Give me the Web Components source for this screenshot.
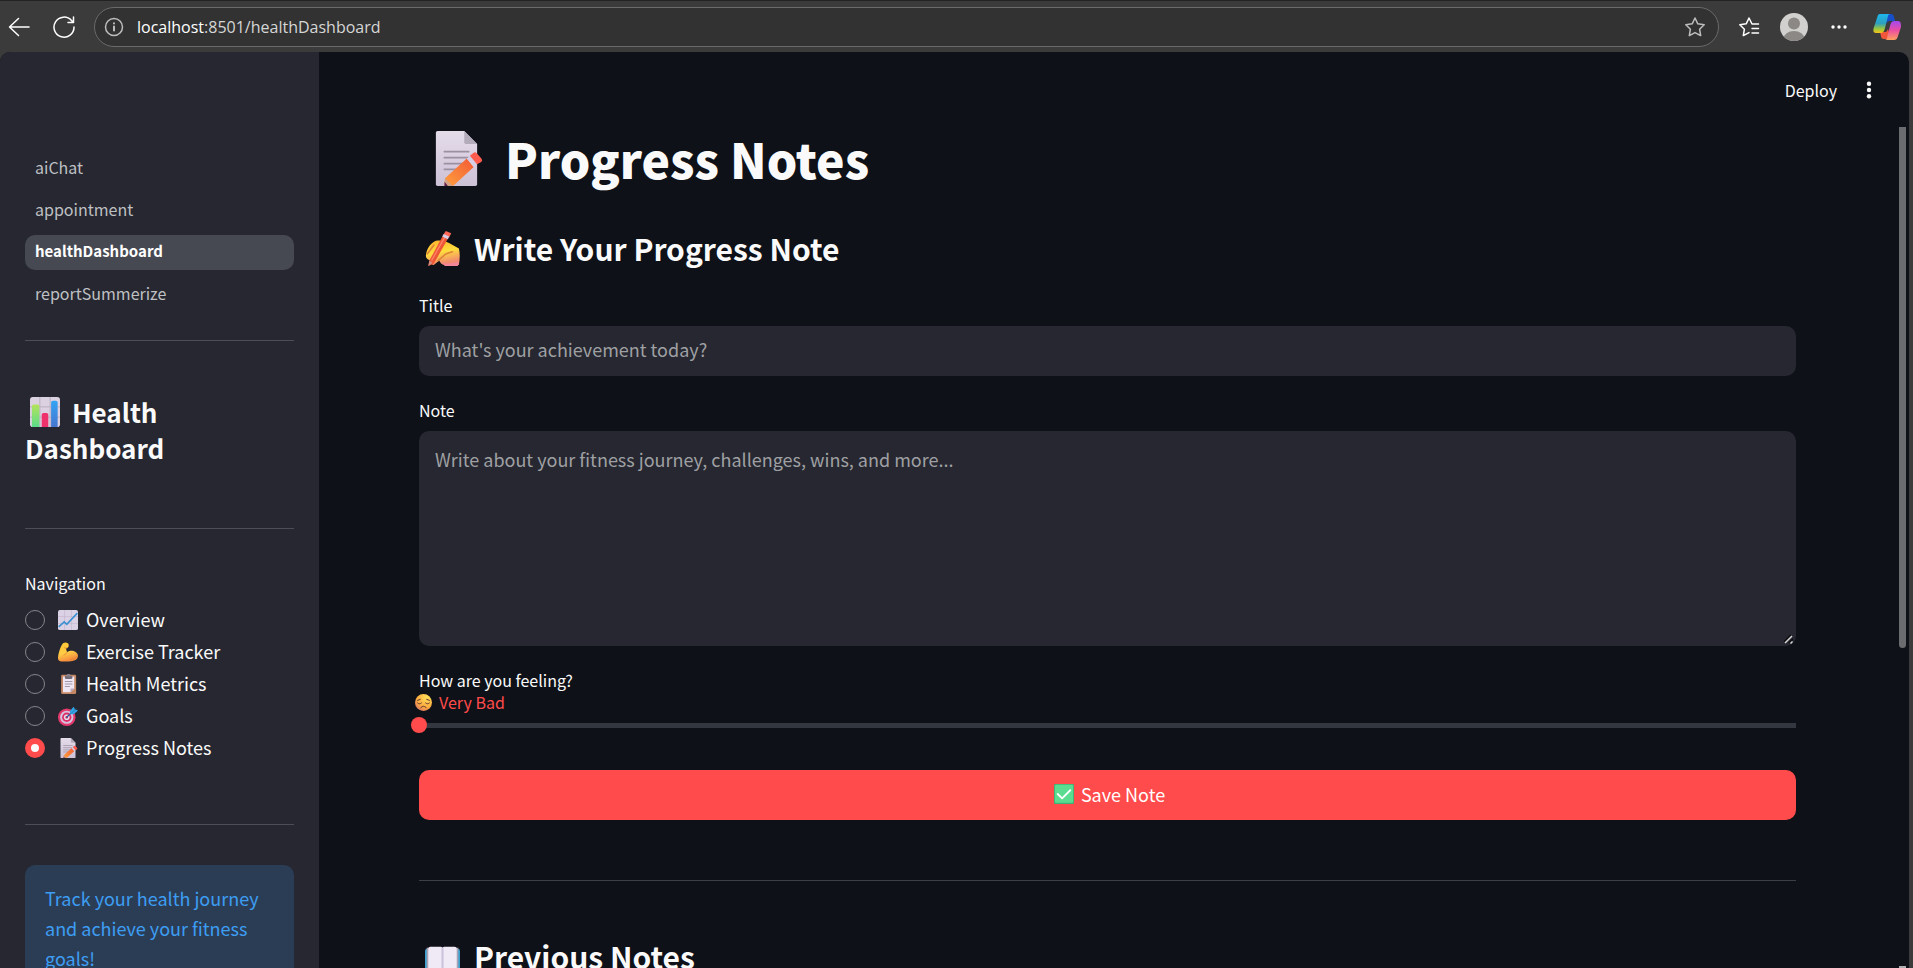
<!DOCTYPE html>
<html lang="en">
<head>
<meta charset="utf-8">
<title>healthDashboard</title>
<style>
  body {
    margin: 0;
    height: 100vh;
    overflow: hidden;
    background: #3b3b3b;
    color: #fafafa;
    font-family: "Noto Sans CJK SC", "Open Sans", sans-serif;
    font-size: 18px;
  }
</style>
</head>
<body>
<app-window>
  <browser-bar slot="bar" host="localhost" path=":8501/healthDashboard"></browser-bar>

  <side-bar slot="side">
    <page-nav pages="aiChat,appointment,healthDashboard,reportSummerize" current="healthDashboard"></page-nav>
    <side-title icon="bars">Health Dashboard</side-title>
    <radio-group label="Navigation"></radio-group>
    <info-box>Track your health journey and achieve your fitness goals!</info-box>
  </side-bar>

  <app-header slot="header"></app-header>

  <main-title icon="memo">Progress Notes</main-title>
  <sub-title icon="writing">Write Your Progress Note</sub-title>
  <text-field label="Title" placeholder="What's your achievement today?"></text-field>
  <note-field label="Note" placeholder="Write about your fitness journey, challenges, wins, and more..."></note-field>
  <mood-slider label="How are you feeling?" mood="Very Bad"></mood-slider>
  <save-button>Save Note</save-button>
  <rule-line></rule-line>
  <sub-title icon="book">Previous Notes</sub-title>
</app-window>

<script>
// emoji artwork, each drawn on a 32 x 32 grid
const emoji = {
  memo: `
    <linearGradient id="p" x2="0" y2="1"><stop stop-color="#e5dcea"/><stop offset="1" stop-color="#cdc1d6"/></linearGradient>
    <linearGradient id="o" x1="1" x2="0" y2="1"><stop stop-color="#f25a35"/><stop offset="1" stop-color="#ffa03e"/></linearGradient>
    <path d="M5 0h15.500l7.500 7.500V31a1 1 0 0 1-1 1H5a1 1 0 0 1-1-1V1a1 1 0 0 1 1-1z" fill="url(#p)"/>
    <path d="M20.500 0v6.500a1 1 0 0 0 1 1H28z" fill="#b4abba"/>
    <path d="M9 12h14M9 15.500h14M9 19h11M9 22.300h8" stroke="#9b90a1" stroke-width="1.100" stroke-linecap="round"/>
    <path d="M9.300 27.500 22 16l4 5-12 11h-5z" fill="url(#o)"/>
    <path d="m22 16 1.800-1.600 4.100 5L26 21z" fill="#d5cee4"/>
    <path d="m23.800 14.400 2-1.600a1.500 1.500 0 0 1 2 .1l2.800 3.200a1.500 1.500 0 0 1-.2 2l-2.500 1.300z" fill="#ff5b4e"/>
    <path d="m9.300 27.500 4.700 4.500H9z" fill="#d3a184"/><path d="m9 29.500 2 2.500H9z" fill="#59214e"/>`,
  writing: `
    <linearGradient id="h" x2="0.300" y2="1"><stop stop-color="#ffb02e"/><stop offset="0.550" stop-color="#ffdd3c"/><stop offset="1" stop-color="#f28b70"/></linearGradient>
    <path d="M1 21c1-5 4-10 9-12 4-1 8 0 12 2l9 5c1 4 1 9 0 15H18c-3 0-4-2-5-4l-5 4c-2 0-3-2-2-4-3 0-6-2-5-6z" fill="url(#h)"/>
    <path d="m2 21 6-8M12 27l7-6 6-2" fill="none" stroke="#dd8439" stroke-width="1.500" stroke-linecap="round"/>
    <path d="m4 27 13-24 5 2L8 30l-5 2z" fill="#ed5737"/><path d="m6 27 13-23" stroke="#ff8566" stroke-width="1.200"/>
    <path d="m17 3 2-3 5 2-2 4z" fill="#ff6654"/><path d="m15.800 5 1.300-2.200 5 2.200-1.200 2.500z" fill="#d7cbe6"/>
    <path d="m4 27 3 2-4 3z" fill="#cf8d80"/>
    <path d="M16 29c5 2 9 0 15-1l-1 4H18z" fill="#f3879a"/>`,
  bars: `
    <linearGradient id="g" x2="0" y2="1"><stop stop-color="#b3e35b"/><stop offset="1" stop-color="#5bdc89"/></linearGradient>
    <linearGradient id="b" x2="0" y2="1"><stop stop-color="#34a4f4"/><stop offset="1" stop-color="#4676cf"/></linearGradient>
    <rect width="32" height="32" rx="3" fill="#dbd1e1"/>
    <path d="M10.500 0v32M21.500 0v32M0 10.500h32M0 21.500h32" stroke="#b9aebe"/>
    <path d="M2 32V10a2 2 0 0 1 2-2h4a2 2 0 0 1 2 2v22z" fill="url(#g)"/>
    <path d="M12.500 32V19a2 2 0 0 1 2-2h3a2 2 0 0 1 2 2v13z" fill="#ed326c"/>
    <path d="M22.500 32V6a2 2 0 0 1 2-2h3a2 2 0 0 1 2 2v26z" fill="url(#b)"/>`,
  chart: `
    <rect width="32" height="32" rx="3" fill="#dbd1e5"/>
    <path d="M10.500 0v32M21.500 0v32M0 10.500h32M0 21.500h32" stroke="#c2b6cc"/>
    <path d="m1 27 9-8 4 4L31 5" fill="none" stroke="#3d91d2" stroke-width="2.600"/>`,
  muscle: `
    <linearGradient id="m" x2="0.300" y2="1"><stop stop-color="#ffc832"/><stop offset="0.600" stop-color="#ffcb46"/><stop offset="1" stop-color="#f78e3e"/></linearGradient>
    <path d="M8 2c4-2 8-1 9 2s-1 6-4 6c0 3 1 5 2 6 5-4 16-2 17 6 0 6-6 9-15 9H6c-4 0-6-2-6-6C1 16 4 7 8 2z" fill="url(#m)"/>
    <path d="M10 9c2 1 3 1 5 0M15 16c-2 2-3 4-6 5M31 22c-3 4-7 6-12 6" fill="none" stroke="#df842e" stroke-width="1.400"/>`,
  clipboard: `
    <rect x="5" y="1" width="24" height="31" rx="2" fill="#c48764"/>
    <path d="M8 4h18v19l-6 6H8z" fill="#efe6f4"/><path d="M26 23h-5a1 1 0 0 0-1 1v5z" fill="#b8aabf"/>
    <path d="M11 3h12v3a2 2 0 0 1-2 2h-8a2 2 0 0 1-2-2z" fill="#756c79"/><rect x="14" width="6" height="4" rx="2" fill="#8b828e"/>
    <path d="M11 12h12M11 16h12M11 20h8" stroke="#958ba0" stroke-width="1.400"/>`,
  target: `
    <circle cx="14" cy="18" r="14" fill="#e5386d"/><circle cx="14" cy="18" r="10.500" fill="#d4c5de"/>
    <circle cx="14" cy="18" r="7.500" fill="#df3169"/><circle cx="14" cy="18" r="4.500" fill="#e5d8ec"/><circle cx="14" cy="18" r="2" fill="#ba2a55"/>
    <path d="m14 18 11-11" stroke="#315f9b" stroke-width="2"/><path d="m19 8 6-7 2 4 5 2-7 6h-5z" fill="#31a4e8"/>
    <path d="m20 13 9-9" stroke="#2672b0" stroke-width="1.200"/>`,
  sad: `
    <radialGradient id="f" cx="0.700" cy="0.200" r="0.900"><stop stop-color="#ffdf58"/><stop offset="0.650" stop-color="#fbab3f"/><stop offset="1" stop-color="#dc7766"/></radialGradient>
    <circle cx="16" cy="16" r="16" fill="url(#f)"/>
    <path d="M5 17c2 2 5 2 7 0M20 17c2 2 5 2 7 0M11 26c2-4 8-4 10 0M5 12l5-2M22 10l5 2" fill="none" stroke="#572d36" stroke-width="1.800" stroke-linecap="round"/>`,
  check: `
    <rect width="32" height="32" rx="2" fill="#3bb475"/><rect x="1.500" y="1" width="29" height="29" rx="2" fill="#5bdc91"/>
    <path d="m6 16 7 7L26 10" fill="none" stroke="#fff" stroke-width="3" stroke-linecap="round" stroke-linejoin="round"/>`,
  book: `
    <rect y="9" width="32" height="23" rx="2" fill="#3ba1d1"/>
    <path d="M1.500 8h3v22h-3zM27.500 8h3v22h-3z" fill="#aaa2b5"/>
    <path d="M3 9a2 2 0 0 1 2-2h9a2 2 0 0 1 2 1 2 2 0 0 1 2-1h9a2 2 0 0 1 2 2v21H3z" fill="#f0eaf6"/>
    <path d="M15 8h2v23h-2z" fill="#cdc4de"/>`
};

class EmojiIcon extends HTMLElement {
  connectedCallback() {
    this.attachShadow({ mode: 'open' }).innerHTML = `
      <style>
        :host { display: inline-block; flex: none; width: 20px; height: 20px; }
        svg { display: block; width: 100%; height: 100%; overflow: visible; }
      </style>
      <svg viewBox="0 0 32 32" aria-hidden="true">${emoji[this.getAttribute('name')]}</svg>`;
  }
}

class AppWindow extends HTMLElement {
  constructor() {
    super();
    this.attachShadow({ mode: 'open' }).innerHTML = `
      <style>
        :host { display: flex; flex-direction: column; height: 100%; }
        .page {
          display: flex;
          flex: 1;
          min-height: 0;
          margin-right: 4px;
          border-radius: 10px 10px 0 0;
          overflow: hidden;
          background: #0e1117;
        }
        .side { width: 319px; flex: none; overflow: hidden; background: #262730; }
        .view { display: flex; flex-direction: column; flex: 1; min-width: 0; }
        .body { display: flex; flex: 1; min-height: 0; }
        main { flex: 1; min-width: 0; overflow: hidden; padding: 0 103px 0 100px; }
        .scroll { display: flex; flex-direction: column; justify-content: space-between; width: 7px; margin-right: 3px; }
        .thumb { height: 62%; border-radius: 0 0 4px 4px; background: #6b6c70; }
        .end { height: 2px; background: #b0b0b2; }
      </style>
      <slot name="bar"></slot>
      <div class="page">
        <div class="side"><slot name="side"></slot></div>
        <div class="view">
          <slot name="header"></slot>
          <div class="body">
            <main><slot></slot></main>
            <div class="scroll"><div class="thumb"></div><div class="end"></div></div>
          </div>
        </div>
      </div>`;
  }
}

class BrowserBar extends HTMLElement {
  connectedCallback() {
    this.attachShadow({ mode: 'open' }).innerHTML = `
      <style>
        :host {
          display: flex;
          align-items: center;
          box-sizing: border-box;
          height: 52px;
          padding: 0 12px 0 8px;
          border-top: 1px solid #222;
          background: #3b3b3b;
          color: #fff;
        }
        button { display: flex; padding: 0; border: 0; background: none; color: inherit; }
        svg { display: block; fill: none; stroke: currentColor; stroke-width: 1.500; stroke-linecap: round; stroke-linejoin: round; }
        .reload { margin: 0 19px 0 23px; }
        .address {
          display: flex;
          align-items: center;
          flex: 1;
          box-sizing: border-box;
          height: 40px;
          margin-right: 19px;
          padding: 0 12px 0 9px;
          border: 1px solid #6a6a6a;
          border-radius: 20px;
          background: #323232;
        }
        .url { flex: 1; margin-left: 13px; font: 16px/24px "Open Sans", sans-serif; color: #d6d6d6; }
        .url b { font-weight: 400; color: #fff; }
        .info, .star { color: #bdbdbd; }
        .avatar { margin: 0 22px 0 20px; }
        .copilot { margin-left: 25px; }
      </style>
      <button aria-label="Back"><svg width="22" height="22" viewBox="0 0 22 22"><path d="M21 11H1.500M10.500 2.500 1.500 11l9 8.500"/></svg></button>
      <button class="reload" aria-label="Refresh"><svg width="22" height="22" viewBox="0 0 22 22"><path d="M21 11A10 10 0 1 1 18.500 4.500L20 6M20.500 1v5.500h-5.500"/></svg></button>
      <div class="address">
        <button class="info" aria-label="Site information"><svg width="20" height="20" viewBox="0 0 20 20"><circle cx="10" cy="10" r="8.500"/><path d="M10 9.500v4M10 6.300v.2" stroke-width="2"/></svg></button>
        <span class="url"><b>${this.getAttribute('host')}</b>${this.getAttribute('path')}</span>
        <button class="star" aria-label="Add to favorites"><svg width="22" height="22" viewBox="0 0 22 22"><path d="m11 2 2.800 5.800 6.400.9-4.600 4.500 1.100 6.400L11 16.600l-5.700 3 1.100-6.400L1.800 8.700l6.400-.9z"/></svg></button>
      </div>
      <button aria-label="Favorites"><svg width="22" height="22" viewBox="0 0 22 22"><path d="M20.500 8H14L11 2 8.200 7.800l-6.400.9 4.600 4.500-1.100 6.400L11 16.600M14 12.500h6.500M14 17h6.500"/></svg></button>
      <button class="avatar" aria-label="Profile"><svg width="28" height="28" viewBox="0 0 28 28">
        <clipPath id="c"><circle cx="14" cy="14" r="14"/></clipPath>
        <g clip-path="url(#c)" stroke="none"><path d="M0 0h28v28H0z" fill="#d2d0ce"/><circle cx="14" cy="10.500" r="6" fill="#8b8885"/><ellipse cx="14" cy="26" rx="10.500" ry="8" fill="#8b8885"/></g>
      </svg></button>
      <button aria-label="Settings and more"><svg width="18" height="22" viewBox="0 0 18 22"><g fill="#fff" stroke="none"><circle cx="3" cy="11" r="1.700"/><circle cx="9" cy="11" r="1.700"/><circle cx="15" cy="11" r="1.700"/></g></svg></button>
      <button class="copilot" aria-label="Copilot"><svg width="28" height="28" viewBox="0 0 28 28">
        <linearGradient id="l" x2="0" y2="1"><stop stop-color="#1cb8ed"/><stop offset="0.500" stop-color="#2e9fbc"/><stop offset="0.800" stop-color="#a1c937"/><stop offset="1" stop-color="#f9c11b"/></linearGradient>
        <linearGradient id="r" x2="0" y2="1"><stop stop-color="#a348f0"/><stop offset="0.500" stop-color="#ed4fa0"/><stop offset="1" stop-color="#ffa15e"/></linearGradient>
        <g stroke="none">
          <path d="M14 1h4c2 0 2.500 1 3 3l1 4h-5c-2 0-3 1-4 3z" fill="#174fc9"/>
          <path d="M7 19h5c2 0 2-1 3-3l2 7-1 3h-5c-2 0-3-1-3-3z" fill="#f2573c"/>
          <path d="M7 1h10c-1 0-2 1-2 2l-3 12c-1 4-2 5-5 5H3c-3 0-3-3-2-6l3-9c1-3 1-4 3-4z" fill="url(#l)"/>
          <path d="M21 27H12c1 0 2-1 2-2l3-12c1-4 2-5 5-5h3c3 0 3 3 3 6l-3 9c-1 3-2 4-4 4z" fill="url(#r)"/>
        </g>
      </svg></button>`;
  }
}

class SideBar extends HTMLElement {
  constructor() {
    super();
    this.attachShadow({ mode: 'open' }).innerHTML = `
      <style>:host { display: block; padding: 99px 25px 0; }</style>
      <slot></slot>`;
  }
}

class PageNav extends HTMLElement {
  connectedCallback() {
    const current = this.getAttribute('current');
    const links = this.getAttribute('pages').split(',').map(page =>
      `<a href="#${page}"${page === current ? ' aria-current="page"' : ''}>${page}</a>`);
    this.attachShadow({ mode: 'open' }).innerHTML = `
      <style>
        :host { display: block; border-bottom: 1px solid #4c4d55; padding-bottom: 28px; }
        nav { display: flex; flex-direction: column; gap: 7px; }
        a {
          padding: 0 10px 3px;
          border-radius: 10px;
          font-size: 16px;
          line-height: 32px;
          color: #bfc0c3;
          text-decoration: none;
        }
        a[aria-current] { background: #474952; color: #fff; font-size: 15px; font-weight: 700; }
      </style>
      <nav>${links.join('')}</nav>`;
  }
}

class SideTitle extends HTMLElement {
  connectedCallback() {
    this.attachShadow({ mode: 'open' }).innerHTML = `
      <style>
        :host { display: block; padding: 53px 0 62px; border-bottom: 1px solid #4c4d55; }
        h1 { width: 160px; margin: 0; font-size: 26px; font-weight: 700; line-height: 36px; }
        emoji-icon { width: 30px; height: 30px; margin: 0 6px 0 5px; vertical-align: -4px; }
      </style>
      <h1><emoji-icon name="${this.getAttribute('icon')}"></emoji-icon> <slot></slot></h1>`;
  }
}

class RadioGroup extends HTMLElement {
  // define the options shown in the group
  options = [
    ['chart', 'Overview'],
    ['muscle', 'Exercise Tracker'],
    ['clipboard', 'Health Metrics'],
    ['target', 'Goals'],
    ['memo', 'Progress Notes']
  ];

  connectedCallback() {
    const rows = this.options.map(([icon, text], i) => `
      <label>
        <input type="radio" name="section"${i === 4 ? ' checked' : ''}>
        <emoji-icon name="${icon}"></emoji-icon>
        <span>${text}</span>
      </label>`);
    this.attachShadow({ mode: 'open' }).innerHTML = `
      <style>
        :host { display: block; padding: 43px 0 60px; border-bottom: 1px solid #4c4d55; }
        fieldset { margin: 0; padding: 0; border: 0; }
        legend { margin-bottom: 10px; padding: 0; font-size: 16px; line-height: 22px; }
        label { display: flex; align-items: center; height: 32px; }
        input {
          appearance: none;
          box-sizing: border-box;
          width: 20px;
          height: 20px;
          margin: 0 13px 0 0;
          border: 1px solid #85868b;
          border-radius: 50%;
        }
        input:checked { border: 6px solid #ff4b4b; background: #fafafa; }
        emoji-icon { margin-right: 8px; }
        span { padding-bottom: 3px; line-height: 28px; }
      </style>
      <fieldset><legend>${this.getAttribute('label')}</legend>${rows.join('')}</fieldset>`;
  }
}

class InfoBox extends HTMLElement {
  constructor() {
    super();
    this.attachShadow({ mode: 'open' }).innerHTML = `
      <style>
        :host {
          display: block;
          margin-top: 40px;
          padding: 18px 20px;
          border-radius: 10px;
          background: #2b3d55;
          color: #3d9df3;
          line-height: 30px;
        }
      </style>
      <slot></slot>`;
  }
}

class AppHeader extends HTMLElement {
  constructor() {
    super();
    this.attachShadow({ mode: 'open' }).innerHTML = `
      <style>
        :host { display: flex; align-items: center; justify-content: flex-end; gap: 27px; height: 75px; padding-right: 35px; }
        button { display: flex; padding: 0; border: 0; background: none; color: inherit; font: 16px/22px "Noto Sans CJK SC", sans-serif; }
      </style>
      <button>Deploy</button>
      <button aria-label="Menu"><svg width="10" height="20" viewBox="0 0 10 20" fill="#fafafa"><circle cx="5" cy="3.700" r="2.200"/><circle cx="5" cy="10" r="2.200"/><circle cx="5" cy="16.300" r="2.200"/></svg></button>`;
  }
}

class MainTitle extends HTMLElement {
  connectedCallback() {
    this.attachShadow({ mode: 'open' }).innerHTML = `
      <style>
        :host { display: block; }
        h1 { display: flex; align-items: center; margin: 0; font-size: 48px; font-weight: 900; line-height: 62px; }
        emoji-icon { width: 55px; height: 55px; margin: 0 21px 0 10px; }
      </style>
      <h1><emoji-icon name="${this.getAttribute('icon')}"></emoji-icon><slot></slot></h1>`;
  }
}

class SubTitle extends HTMLElement {
  connectedCallback() {
    this.attachShadow({ mode: 'open' }).innerHTML = `
      <style>
        :host { display: block; padding: 38px 0 25px; }
        h2 { display: flex; align-items: center; margin: 0; font-size: 30px; font-weight: 700; line-height: 42px; }
        emoji-icon { width: 35px; height: 35px; margin: 0 14px 0 6px; }
      </style>
      <h2><emoji-icon name="${this.getAttribute('icon')}"></emoji-icon><slot></slot></h2>`;
  }
}

// styles shared by the form fields
const fieldStyle = `
  :host { display: block; margin-bottom: 23px; }
  label { display: block; margin-bottom: 10px; font-size: 16px; line-height: 22px; }
  input, textarea {
    display: block;
    box-sizing: border-box;
    width: 100%;
    border: 0;
    border-radius: 10px;
    background: #262730;
    color: #fafafa;
    font: 18px/28px "Noto Sans CJK SC", sans-serif;
  }
  ::placeholder { color: #9fa0a3; opacity: 1; }
`;

class TextField extends HTMLElement {
  connectedCallback() {
    this.attachShadow({ mode: 'open' }).innerHTML = `
      <style>
        ${fieldStyle}
        input { height: 50px; padding: 0 16px 4px; }
      </style>
      <label for="field">${this.getAttribute('label')}</label>
      <input id="field" type="text" placeholder="${this.getAttribute('placeholder')}">`;
  }
}

class NoteField extends HTMLElement {
  connectedCallback() {
    this.attachShadow({ mode: 'open' }).innerHTML = `
      <style>
        ${fieldStyle}
        .wrap { position: relative; }
        textarea { height: 215px; padding: 14px 16px; resize: none; }
        svg { position: absolute; right: 2px; bottom: 2px; }
      </style>
      <label for="field">${this.getAttribute('label')}</label>
      <div class="wrap">
        <textarea id="field" placeholder="${this.getAttribute('placeholder')}"></textarea>
        <svg width="10" height="10" viewBox="0 0 10 10" stroke-width="1.500"><path d="m0 8 7-7M5 9l4-4" stroke="#0b0b0d"/><path d="m1 9 7-7M6.500 9.500l2-2" stroke="#d8d8d8"/></svg>
      </div>`;
  }
}

class MoodSlider extends HTMLElement {
  connectedCallback() {
    this.attachShadow({ mode: 'open' }).innerHTML = `
      <style>
        :host { display: block; margin-bottom: 37px; font-size: 16px; line-height: 22px; }
        label { display: block; }
        output { display: flex; align-items: center; gap: 7px; margin: 0 0 4px -4px; color: #ff4b4b; }
        emoji-icon { width: 17px; height: 17px; }
        input { appearance: none; display: block; width: calc(100% + 16px); height: 16px; margin: 0 -8px; background: none; }
        input::-webkit-slider-runnable-track {
          height: 16px;
          background: linear-gradient(#333740, #333740) center / calc(100% - 16px) 5px no-repeat;
        }
        input::-webkit-slider-thumb { appearance: none; width: 16px; height: 16px; border-radius: 50%; background: #ff4b4b; }
      </style>
      <label for="mood">${this.getAttribute('label')}</label>
      <output for="mood"><emoji-icon name="sad"></emoji-icon>${this.getAttribute('mood')}</output>
      <input id="mood" type="range" min="0" max="4" value="0">`;
  }
}

class SaveButton extends HTMLElement {
  constructor() {
    super();
    this.attachShadow({ mode: 'open' }).innerHTML = `
      <style>
        :host { display: block; }
        button {
          display: flex;
          align-items: center;
          justify-content: center;
          gap: 7px;
          width: 100%;
          height: 50px;
          padding: 0 0 2px 4px;
          border: 0;
          border-radius: 10px;
          background: #ff4b4b;
          color: #fff;
          font: 18px/26px "Noto Sans CJK SC", sans-serif;
        }
      </style>
      <button><emoji-icon name="check"></emoji-icon><slot></slot></button>`;
  }
}

class RuleLine extends HTMLElement {
  constructor() {
    super();
    this.attachShadow({ mode: 'open' }).innerHTML = `
      <style>
        :host { display: block; padding: 60px 0 16px; }
        hr { height: 1px; margin: 0; border: 0; background: #3d3f44; }
      </style>
      <hr>`;
  }
}

customElements.define('emoji-icon', EmojiIcon);
customElements.define('app-window', AppWindow);
customElements.define('browser-bar', BrowserBar);
customElements.define('side-bar', SideBar);
customElements.define('page-nav', PageNav);
customElements.define('side-title', SideTitle);
customElements.define('radio-group', RadioGroup);
customElements.define('info-box', InfoBox);
customElements.define('app-header', AppHeader);
customElements.define('main-title', MainTitle);
customElements.define('sub-title', SubTitle);
customElements.define('text-field', TextField);
customElements.define('note-field', NoteField);
customElements.define('mood-slider', MoodSlider);
customElements.define('save-button', SaveButton);
customElements.define('rule-line', RuleLine);
</script>
</body>
</html>
